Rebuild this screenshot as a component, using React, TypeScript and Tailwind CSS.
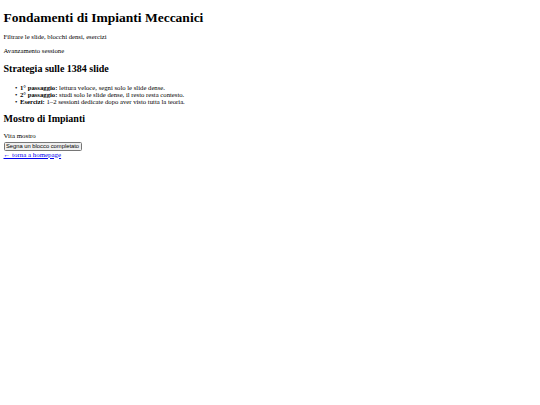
const items: [string, string][] = [
  ["1° passaggio:", " lettura veloce, segni solo le slide dense."],
  ["2° passaggio:", " studi solo le slide dense, il resto resta contesto."],
  ["Esercizi:", " 1–2 sessioni dedicate dopo aver visto tutta la teoria."],
];

export default function App() {
  return (
    <div className="px-[3.5px] font-['Liberation_Serif','Times_New_Roman',serif] text-black bg-white min-h-[405px]">
      <h1 className="text-[13.5px] leading-[15px] font-bold pt-[10px]">Fondamenti di Impianti Meccanici</h1>
      <p className="text-[6.7px] leading-[8px] mt-[7.7px]">Filtrare le slide, blocchi densi, esercizi</p>
      <p className="text-[6.7px] leading-[8px] mt-[6px]">Avanzamento sessione</p>
      <h2 className="text-[10px] leading-[12px] font-bold mt-[7.9px]">Strategia sulle 1384 slide</h2>
      <ul className="pl-[11.5px] mt-[9.1px] text-[6.7px] leading-[7.3px]">
        {items.map(([b, t]) => (
          <li key={b} className="flex">
            <span className="w-[5px] shrink-0">•</span>
            <span>
              <b>{b}</b>
              {t}
            </span>
          </li>
        ))}
      </ul>
      <h2 className="text-[10px] leading-[12px] font-bold mt-[7px]">Mostro di Impianti</h2>
      <div className="text-[6.9px] leading-[8px] mt-[7.1px]">Vita mostro</div>
      <button className="block mt-[2.6px] h-[8.4px] w-[78px] px-0 border border-[#767676] rounded-[1.5px] bg-[#efefef] font-['Liberation_Sans',Arial,sans-serif] text-[5.8px] leading-[6px] text-black">Segna un blocco completato</button>
      <a href="#" className="block text-[6.9px] leading-[7px] text-[#0000ee] underline w-fit">← torna a homepage</a>
    </div>
  );
}
